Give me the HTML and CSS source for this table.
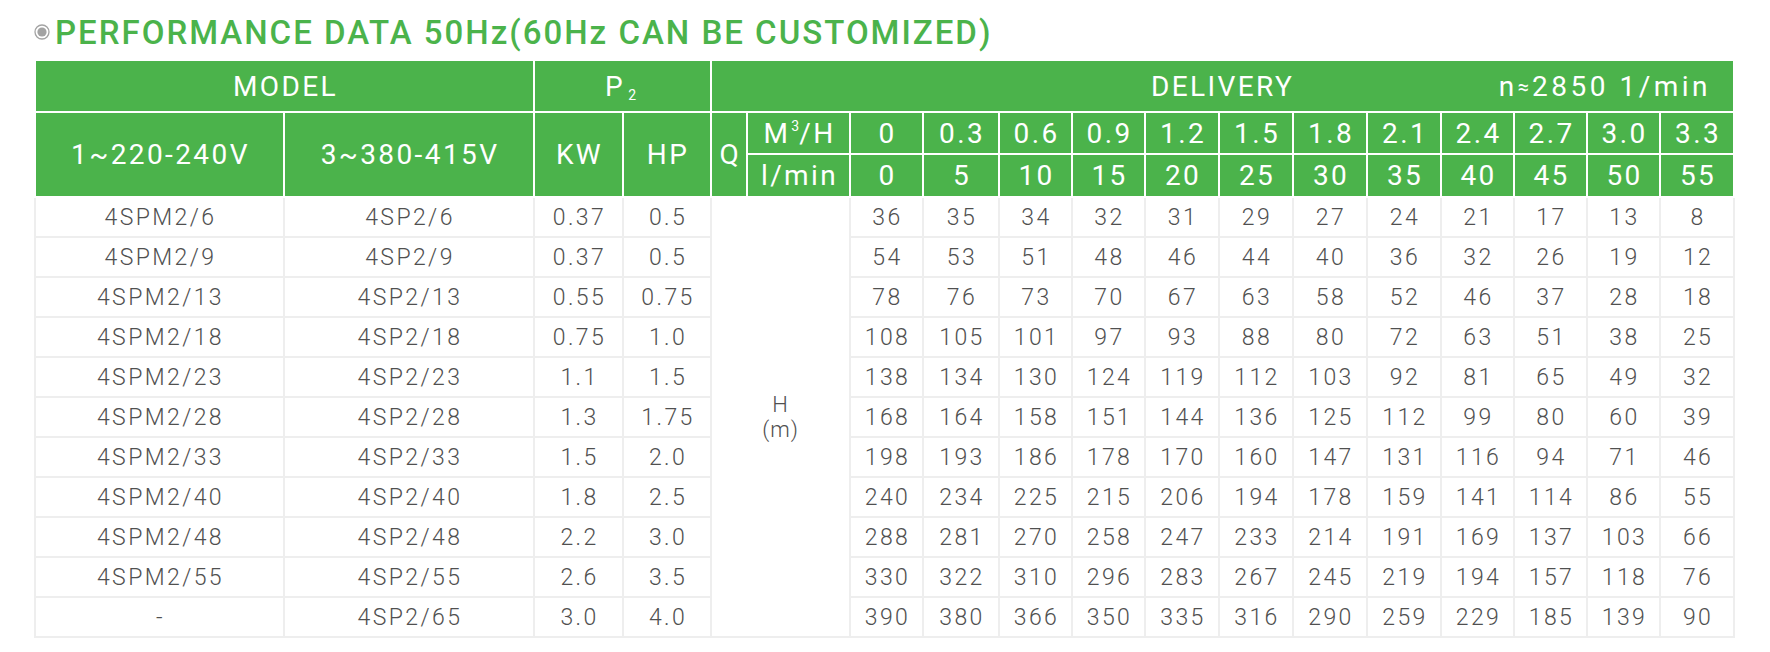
FILE: index.html
```html
<!DOCTYPE html>
<html lang="en">
<head>
<meta charset="utf-8">
<title>Performance data</title>
<link rel="stylesheet" href="styles.css">
</head>
<body>
<div class="page">
  <h1 class="title">
    <svg class="bullet" width="16" height="16" viewBox="0 0 16 16" aria-hidden="true">
      <circle cx="8" cy="8" r="7" fill="none" stroke="#a3a3a3" stroke-width="1.3"/>
      <circle cx="8" cy="8" r="4.6" fill="#a3a3a3"/>
    </svg>
    <span>PERFORMANCE DATA 50Hz(60Hz CAN BE CUSTOMIZED)</span>
  </h1>
  <table class="perf">
    <colgroup>
      <col class="c-model"><col class="c-model2"><col class="c-kw"><col class="c-hp"><col class="c-q"><col class="c-unit">
      <col class="c-v"><col class="c-v76"><col class="c-v"><col class="c-v"><col class="c-v74"><col class="c-v74"><col class="c-v74"><col class="c-v74"><col class="c-v"><col class="c-v"><col class="c-v"><col class="c-v74">
    </colgroup>
    <thead>
      <tr class="h1">
        <th colspan="2">MODEL</th>
        <th colspan="2" class="p2">P<sub>2</sub></th>
        <th colspan="14" class="delivery">
          <div class="deliv-inner"><span></span><span>DELIVERY</span><span class="speed">n<small>≈</small>2850 1/min</span></div>
        </th>
      </tr>
      <tr class="h2">
        <th rowspan="2">1~220-240V</th>
        <th rowspan="2">3~380-415V</th>
        <th rowspan="2">KW</th>
        <th rowspan="2">HP</th>
        <th rowspan="2" class="q">Q</th>
        <th>M<sup>3</sup>/H</th>
        <th>0</th><th>0.3</th><th>0.6</th><th>0.9</th><th>1.2</th><th>1.5</th><th>1.8</th><th>2.1</th><th>2.4</th><th>2.7</th><th>3.0</th><th>3.3</th>
      </tr>
      <tr class="h3">
        <th>l/min</th>
        <th>0</th><th>5</th><th>10</th><th>15</th><th>20</th><th>25</th><th>30</th><th>35</th><th>40</th><th>45</th><th>50</th><th>55</th>
      </tr>
    </thead>
    <tbody>
      <tr><td>4SPM2/6</td><td>4SP2/6</td><td>0.37</td><td>0.5</td><td class="hm" colspan="2" rowspan="11">H<br>(m)</td><td>36</td><td>35</td><td>34</td><td>32</td><td>31</td><td>29</td><td>27</td><td>24</td><td>21</td><td>17</td><td>13</td><td>8</td></tr>
      <tr><td>4SPM2/9</td><td>4SP2/9</td><td>0.37</td><td>0.5</td><td>54</td><td>53</td><td>51</td><td>48</td><td>46</td><td>44</td><td>40</td><td>36</td><td>32</td><td>26</td><td>19</td><td>12</td></tr>
      <tr><td>4SPM2/13</td><td>4SP2/13</td><td>0.55</td><td>0.75</td><td>78</td><td>76</td><td>73</td><td>70</td><td>67</td><td>63</td><td>58</td><td>52</td><td>46</td><td>37</td><td>28</td><td>18</td></tr>
      <tr><td>4SPM2/18</td><td>4SP2/18</td><td>0.75</td><td>1.0</td><td>108</td><td>105</td><td>101</td><td>97</td><td>93</td><td>88</td><td>80</td><td>72</td><td>63</td><td>51</td><td>38</td><td>25</td></tr>
      <tr><td>4SPM2/23</td><td>4SP2/23</td><td>1.1</td><td>1.5</td><td>138</td><td>134</td><td>130</td><td>124</td><td>119</td><td>112</td><td>103</td><td>92</td><td>81</td><td>65</td><td>49</td><td>32</td></tr>
      <tr><td>4SPM2/28</td><td>4SP2/28</td><td>1.3</td><td>1.75</td><td>168</td><td>164</td><td>158</td><td>151</td><td>144</td><td>136</td><td>125</td><td>112</td><td>99</td><td>80</td><td>60</td><td>39</td></tr>
      <tr><td>4SPM2/33</td><td>4SP2/33</td><td>1.5</td><td>2.0</td><td>198</td><td>193</td><td>186</td><td>178</td><td>170</td><td>160</td><td>147</td><td>131</td><td>116</td><td>94</td><td>71</td><td>46</td></tr>
      <tr><td>4SPM2/40</td><td>4SP2/40</td><td>1.8</td><td>2.5</td><td>240</td><td>234</td><td>225</td><td>215</td><td>206</td><td>194</td><td>178</td><td>159</td><td>141</td><td>114</td><td>86</td><td>55</td></tr>
      <tr><td>4SPM2/48</td><td>4SP2/48</td><td>2.2</td><td>3.0</td><td>288</td><td>281</td><td>270</td><td>258</td><td>247</td><td>233</td><td>214</td><td>191</td><td>169</td><td>137</td><td>103</td><td>66</td></tr>
      <tr><td>4SPM2/55</td><td>4SP2/55</td><td>2.6</td><td>3.5</td><td>330</td><td>322</td><td>310</td><td>296</td><td>283</td><td>267</td><td>245</td><td>219</td><td>194</td><td>157</td><td>118</td><td>76</td></tr>
      <tr><td>-</td><td>4SP2/65</td><td>3.0</td><td>4.0</td><td>390</td><td>380</td><td>366</td><td>350</td><td>335</td><td>316</td><td>290</td><td>259</td><td>229</td><td>185</td><td>139</td><td>90</td></tr>
    </tbody>
  </table>
</div>
</body>
</html>
```

FILE: styles.css
```css
html, body {
  margin: 0;
  padding: 0;
  background: #fff;
}

.page {
  padding: 13px 0 0 34px;
  font-family: Roboto, "Liberation Sans", sans-serif;
}

.title {
  display: flex;
  align-items: center;
  gap: 5px;
  margin: 0 0 6px 0;
  height: 40px;
  font-size: 33px;
  line-height: 40px;
  font-weight: 500;
  color: #4bb34b;
  letter-spacing: 2px;
}

.bullet {
  flex: none;
  margin-top: -2px;
}

.perf {
  border-collapse: collapse;
  table-layout: fixed;
  width: 1701px;
}

.c-model { width: 249px; }
.c-model2 { width: 250px; }
.c-kw { width: 89px; }
.c-hp { width: 88px; }
.c-q { width: 36px; }
.c-unit { width: 103px; }
.c-v { width: 73px; }
.c-v74 { width: 74px; }
.c-v76 { width: 76px; }

.perf th {
  background: #4bb34b;
  color: #fff;
  border: 2px solid #fff;
  font-weight: 400;
  font-size: 28px;
  letter-spacing: 2.4px;
  padding: 0 0 0 2px;
  text-align: center;
  vertical-align: middle;
  white-space: nowrap;
  overflow: hidden;
}

.perf th.q {
  padding: 0;
  letter-spacing: 0;
}

.perf tr.h1 { height: 52px; }
.perf tr.h2 { height: 42px; }
.perf tr.h3 { height: 43px; }

.perf th.p2 {
  padding-right: 6px;
}

.perf sub {
  font-size: 14px;
  vertical-align: -4px;
  letter-spacing: 0;
  margin-left: 3px;
}

.perf sup {
  font-size: 14px;
  vertical-align: 12px;
  letter-spacing: 0;
  margin-left: 1px;
}

.perf th.delivery {
  padding: 0;
}

.deliv-inner {
  display: grid;
  grid-template-columns: 1fr auto 1fr;
  align-items: center;
}

.deliv-inner .speed {
  justify-self: end;
  padding-right: 22px;
  letter-spacing: 3.5px;
}

.deliv-inner small {
  font-size: 20px;
  letter-spacing: 0;
  margin: 0 3px 0 0;
  position: relative;
  top: -2px;
}

.perf td {
  border: 2px solid #eeeeee;
  height: 40px;
  padding: 0 0 0 2px;
  box-sizing: border-box;
  color: #505050;
  font-size: 23px;
  font-weight: 300;
  letter-spacing: 2.4px;
  text-align: center;
  vertical-align: middle;
  white-space: nowrap;
}

.perf td.hm {
  font-size: 22px;
  line-height: 25px;
  letter-spacing: 1px;
  padding: 0;
}
```
